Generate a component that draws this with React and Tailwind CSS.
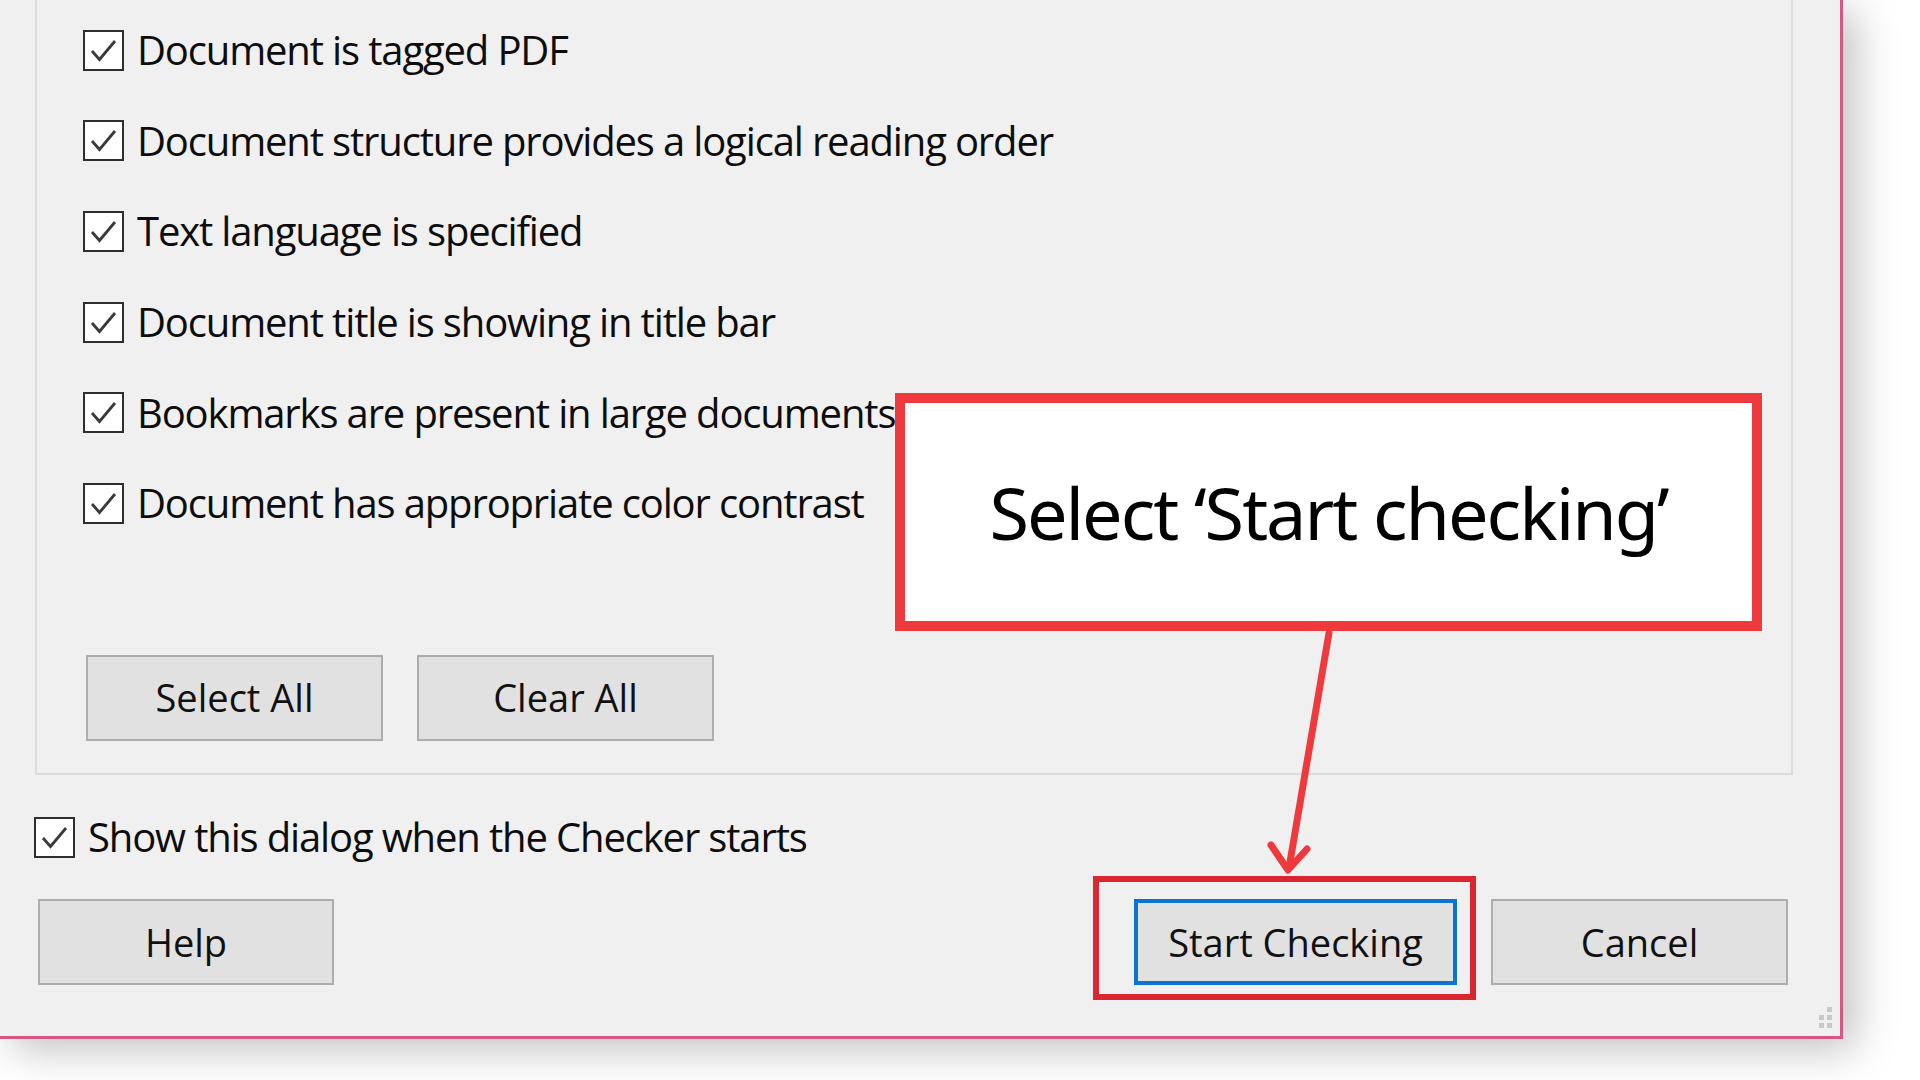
import React from 'react';

const items = [
  'Document is tagged PDF',
  'Document structure provides a logical reading order',
  'Text language is specified',
  'Document title is showing in title bar',
  'Bookmarks are present in large documents',
  'Document has appropriate color contrast',
];

const Check = () => (
  <div className="w-[41px] h-[41px] shrink-0 bg-white border-2 border-[#2e2e2e]">
    <svg width="37" height="37" viewBox="0 0 37 37">
      <path d="M7 19 L14.5 27.5 L30 9" fill="none" stroke="#3a3a3a" strokeWidth="2.8" />
    </svg>
  </div>
);

const Btn = ({ children, className = '', border = 'border-2 border-[#adadad]' }) => (
  <div className={`h-[86px] flex items-center justify-center bg-[#e1e1e1] text-[38px] text-[#111] ${border} ${className}`}>
    {children}
  </div>
);

export default function App() {
  return (
    <div
      className="relative w-[1920px] h-[1080px] bg-white overflow-hidden"
      style={{ fontFamily: '"Open Sans", "Noto Sans", sans-serif' }}
    >
      <div className="relative w-[1843px] h-[1039px] bg-[#f0f0f0] border-r-[3px] border-b-[3px] border-[#d4587f] shadow-[12px_10px_40px_rgba(0,0,0,0.25)]">
        {/* group box */}
        <div className="ml-[35px] w-[1758px] h-[775px] border-x-2 border-b-2 border-[#dcdcdc] pt-[5px] pl-[46px]">
          {items.map((t) => (
            <div key={t} className="h-[90.6px] flex items-center gap-[13px]">
              <Check />
              <span className="text-[40px] text-[#0d0d0d] tracking-[-1.15px] leading-none">{t}</span>
            </div>
          ))}
          <div className="flex gap-[34px] mt-[106px] ml-[3px]">
            <Btn className="w-[297px]">Select All</Btn>
            <Btn className="w-[297px]">Clear All</Btn>
          </div>
        </div>

        <div className="ml-[34px] mt-[41px] flex items-center gap-[13px] h-[42px]">
          <Check />
          <span className="text-[40px] text-[#0d0d0d] tracking-[-1.15px] leading-none">Show this dialog when the Checker starts</span>
        </div>

        <div className="flex mt-[41px] ml-[38px] mr-[52px]">
          <Btn className="w-[296px]">Help</Btn>
          <Btn className="w-[323px] ml-auto" border="border-[4px] border-[#0a74d0]">Start Checking</Btn>
          <Btn className="w-[297px] ml-[34px]">Cancel</Btn>
        </div>

        {/* resize grip */}
        <svg className="absolute right-[6px] bottom-[6px]" width="18" height="24" viewBox="0 0 18 24">
          <rect x="11" y="1" width="5" height="5" fill="#c8c8c8" />
          <rect x="3" y="9" width="5" height="5" fill="#c8c8c8" />
          <rect x="11" y="9" width="5" height="5" fill="#c8c8c8" />
          <rect x="3" y="17" width="5" height="5" fill="#c8c8c8" />
          <rect x="11" y="17" width="5" height="5" fill="#c8c8c8" />
        </svg>
      </div>

      {/* annotation callout */}
      <div className="absolute left-[895px] top-[393px] w-[867px] h-[238px] bg-white border-[10px] border-[#ef3a3d] flex items-center justify-center">
        <span
          className="text-[72px] text-black tracking-[-2px] leading-none"
          style={{ fontFamily: '"Noto Sans", sans-serif' }}
        >
          Select ‘Start checking’
        </span>
      </div>

      <svg className="absolute left-0 top-0 pointer-events-none" width="1920" height="1080">
        <path d="M1329 633 L1289 868" stroke="#ef3a3d" strokeWidth="7" strokeLinecap="round" fill="none" />
        <path d="M1271 845 L1288 870 L1307 849" stroke="#ef3a3d" strokeWidth="7" strokeLinecap="round" strokeLinejoin="round" fill="none" />
      </svg>

      <div className="absolute left-[1093px] top-[876px] w-[383px] h-[124px] border-[6px] border-[#d92630]" />
    </div>
  );
}
